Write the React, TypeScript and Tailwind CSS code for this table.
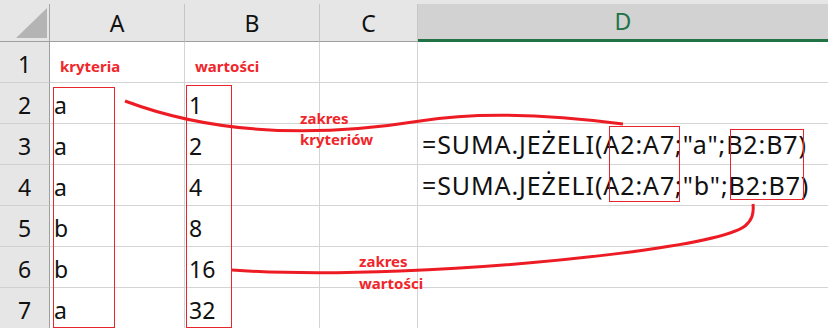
import React from "react";

const cols = ["A", "B", "C", "D"];

const label = "font-bold text-[15px] text-[#f0262b] pl-[6px] pb-[2px]";

const rows: { a?: React.ReactNode; b?: React.ReactNode; d?: string }[] = [
  {
    a: <span className={label}>kryteria</span>,
    b: <span className={label}>wartości</span>,
  },
  { a: "a", b: "1" },
  { a: "a", b: "2", d: '=SUMA.JEŻELI(A2:A7;"a";B2:B7)' },
  { a: "a", b: "4", d: '=SUMA.JEŻELI(A2:A7;"b";B2:B7)' },
  { a: "b", b: "8" },
  { a: "b", b: "16" },
  { a: "a", b: "32" },
];

function Cell({ children, last }: { children?: React.ReactNode; last?: boolean }) {
  return (
    <div
      className={`h-[41px] flex items-end pb-[6px] pl-[4px] border-b border-[#d4d4d4] bg-white overflow-hidden whitespace-nowrap ${
        last ? "" : "border-r"
      }`}
    >
      {children}
    </div>
  );
}

export default function App() {
  return (
    <div
      className="relative w-[828px] h-[328px] overflow-hidden bg-white text-[#111]"
      style={{ fontFamily: '"Noto Sans", "DejaVu Sans", sans-serif' }}
    >
      <div className="grid grid-cols-[50px_135px_135px_98px_1fr] text-[23px] leading-none">
        {/* corner */}
        <div className="h-[42px] bg-[#e6e6e6] border-b border-[#9e9e9e] pt-[4px]">
          <div className="h-full border-r border-[#a6a6a6] relative">
            <svg width="50" height="38" className="absolute left-0 top-0">
              <polygon points="16,34 47,4 47,34" fill="#b4b4b4" />
            </svg>
          </div>
        </div>
        {cols.map((c) => (
          <div key={c} className="h-[42px] bg-[#e6e6e6] pt-[4px]">
            {c === "D" ? (
              <div className="h-full bg-[#d2d2d2] border-b-[3px] border-[#217346] flex items-center justify-center text-[#217346]">
                {c}
              </div>
            ) : (
              <div className="h-full border-r border-b border-r-[#c6c6c6] border-b-[#9e9e9e] flex items-center justify-center pt-[2px]">
                {c}
              </div>
            )}
          </div>
        ))}

        {rows.map((r, i) => (
          <React.Fragment key={i}>
            <div className="h-[41px] bg-[#e6e6e6] border-r border-r-[#9e9e9e] border-b border-b-[#d0d0d0] flex items-end justify-center pb-[6px]">
              {i + 1}
            </div>
            <Cell>{r.a}</Cell>
            <Cell>{r.b}</Cell>
            <Cell />
            <Cell last>{r.d && <span className="text-[25px] tracking-[0.9px] pb-[1px]">{r.d}</span>}</Cell>
          </React.Fragment>
        ))}
      </div>

      {/* highlighted ranges */}
      <div className="absolute left-[53px] top-[87px] w-[62px] h-[241px] border border-[#e8242c]" />
      <div className="absolute left-[186px] top-[85px] w-[46px] h-[243px] border border-[#e8242c]" />
      <div className="absolute left-[609px] top-[126px] w-[71px] h-[76px] border border-[#e8242c]" />
      <div className="absolute left-[730px] top-[129px] w-[74px] h-[71px] border border-[#e8242c]" />

      {/* arrows to the ranges */}
      <svg className="absolute left-0 top-0 pointer-events-none" width="828" height="328">
        <path
          d="M125 101 Q250 148 420 121 Q500 108 623 124"
          fill="none"
          stroke="#ed1c24"
          strokeWidth="3"
        />
        <path
          d="M232 270 Q300 275 400 271 C550 265 720 245 745 226 C752 220 754 214 753 204"
          fill="none"
          stroke="#ed1c24"
          strokeWidth="3"
        />
      </svg>

      <div className="absolute left-[300px] top-[108px] font-bold text-[15px] leading-[21px] text-[#f0262b]">
        <div>zakres</div>
        <div>kryteriów</div>
      </div>
      <div className="absolute left-[359px] top-[250px] font-bold text-[15px] leading-[22px] text-[#f0262b]">
        <div>zakres</div>
        <div>wartości</div>
      </div>
    </div>
  );
}
